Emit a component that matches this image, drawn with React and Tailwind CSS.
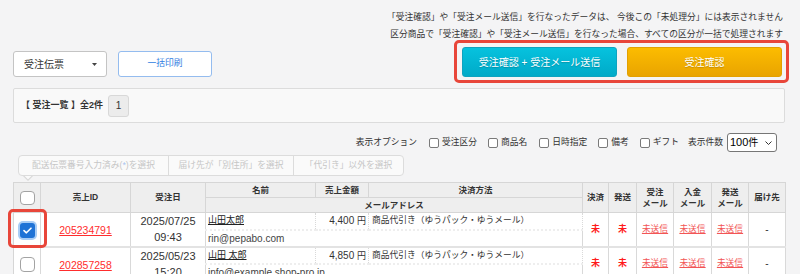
import React from 'react';

const cols = [27, 90, 75, 110, 53, 214, 26, 28, 37, 38, 37, 37];

const orders = [
  {
    id: '205234791',
    date: '2025/07/25',
    time: '09:43',
    name: '山田太郎',
    amount: '4,400',
    pay: '商品代引き（ゆうパック・ゆうメール）',
    email: 'rin@pepabo.com',
    checked: true,
  },
  {
    id: '202857258',
    date: '2025/05/23',
    time: '15:20',
    name: '山田 太郎',
    amount: '4,850',
    pay: '商品代引き（ゆうパック・ゆうメール）',
    email: 'info@example.shop-pro.jp',
    checked: false,
  },
];

function Box() {
  return <span className="inline-block w-[10px] h-[10px] border border-[#7a7a7a] rounded-[2px] bg-white mr-[3px]" />;
}

export default function App() {
  const th = 'border border-[#d6d6d6] bg-[#eeeeee] font-bold text-[8.5px] text-[#333] text-center leading-[11px] p-0';
  const td = 'border-r border-dotted border-[#d9d9d9] p-0';
  const bot = 'border-b-2 border-solid border-b-[#e3e3e3]';

  return (
    <div className="w-[800px] h-[274px] overflow-hidden bg-[#f4f4f5] text-[#333] font-['Liberation_Sans','Noto_Sans_CJK_JP',sans-serif]">
      {/* notes */}
      <div className="h-[40px] pt-[9px] pr-[17px] text-right text-[8.75px] leading-[17px] text-[#333]">
        <p>「受注確認」や「受注メール送信」を行なったデータは、 今後この「未処理分」には表示されません</p>
        <p>区分商品で「受注確認」や「受注メール送信」を行なった場合、すべての区分が一括で処理されます</p>
      </div>

      {/* actions */}
      <div className="flex justify-between items-start h-[43px] pl-[13px] pr-[11px]">
        <div className="flex gap-[11px] mt-[11px]">
          <div className="w-[94px] h-[26px] bg-white border border-[#c4c4c4] rounded-[3px] flex items-center justify-between pl-[10px] pr-[9px] text-[10px] text-[#333]">
            <span>受注伝票</span>
            <svg width="5" height="3" viewBox="0 0 5 3"><polygon points="0,0 5,0 2.5,3" fill="#444" /></svg>
          </div>
          <button className="w-[94px] h-[26px] bg-white border border-[#94bcef] rounded-[3px] text-[8.75px] text-[#2f7de1]">
            一括印刷
          </button>
        </div>
        <div className="w-[335px] h-[43px] border-[3px] border-[#e8463a] rounded-[5px] flex gap-[10px] pl-[5px] pt-[4px]">
          <button className="w-[155px] h-[30px] rounded-[3px] border border-[#0ea3bf] bg-gradient-to-b from-[#06c2de] to-[#00aac8] text-white text-[10px] [text-shadow:0_1px_1px_rgba(0,0,0,0.2)]">
            受注確認 + 受注メール送信
          </button>
          <button className="w-[155px] h-[30px] rounded-[3px] border border-[#e3a000] bg-gradient-to-b from-[#fcbc00] to-[#e9a400] text-white text-[10px] [text-shadow:0_1px_1px_rgba(0,0,0,0.2)]">
            受注確認
          </button>
        </div>
      </div>

      <div className="mx-[13px] mr-[15px]">
        {/* summary */}
        <div className="mt-[5px] h-[35px] bg-[#f9f9f9] border border-[#dcdcdc] rounded-[2px] flex items-center pl-[7px]">
          <span className="text-[9px] font-bold text-[#333]">【 受注一覧 】全2件</span>
          <span className="ml-[5px] w-[21px] h-[22px] bg-[#ececec] border border-[#d8d8d8] rounded-[3px] flex items-center justify-center text-[10px] text-[#333]">1</span>
        </div>

        {/* options */}
        <div className="mt-[10px] h-[19px] flex justify-end items-center pr-[8px] text-[8.75px] text-[#333]">
          <span className="mr-[12px]">表示オプション</span>
          <label className="flex items-center mr-[11px]"><Box />受注区分</label>
          <label className="flex items-center mr-[12px]"><Box />商品名</label>
          <label className="flex items-center mr-[11px]"><Box />日時指定</label>
          <label className="flex items-center mr-[11px]"><Box />備考</label>
          <label className="flex items-center mr-[9px]"><Box />ギフト</label>
          <span className="mr-[4px]">表示件数</span>
          <div className="w-[50px] h-[19px] bg-white border border-[#767676] rounded-[3px] flex items-center justify-between pl-[2px] pr-[4px] text-[11px] text-black">
            <span>100<span className="text-[10px]">件</span></span>
            <svg width="7" height="4" viewBox="0 0 7 4"><polyline points="0.5,0.5 3.5,3.5 6.5,0.5" fill="none" stroke="#333" strokeWidth="1" /></svg>
          </div>
        </div>

        {/* segmented filters */}
        <div className="relative mt-[3px] ml-[5px] w-[386px] h-[21px] flex bg-[#fafafa] border border-[#dcdcdc] rounded-[4px] text-[8.75px] text-[#c6c6c6]">
          <div className="w-[150px] flex items-center justify-center border-r border-[#dcdcdc]">
            配送伝票番号入力済み(<span className="text-[#a9c3f0]">*</span>)を選択
          </div>
          <div className="w-[125px] flex items-center justify-center border-r border-[#dcdcdc]">届け先が「別住所」を選択</div>
          <div className="flex-1 flex items-center justify-center">「代引き」以外を選択</div>
          <svg className="absolute left-[4px] top-[20px]" width="10" height="6" viewBox="0 0 10 6">
            <polygon points="0,0 10,0 5,5" fill="#d6d6d6" />
            <polygon points="1.5,0 8.5,0 5,3.5" fill="#fafafa" />
          </svg>
        </div>

        {/* table */}
        <table className="mt-[6px] w-[772px] table-fixed border-collapse border border-[#d6d6d6] bg-white">
          <colgroup>
            {cols.map((w, i) => <col key={i} style={{ width: w }} />)}
          </colgroup>
          <thead>
            <tr className="h-[15px]">
              <th rowSpan={2} className={th}>
                <span className="inline-block align-middle w-[15px] h-[14px] bg-white border border-[#a3a3a3] rounded-[4px]" />
              </th>
              <th rowSpan={2} className={th}>売上ID</th>
              <th rowSpan={2} className={th}>受注日</th>
              <th className={th}>名前</th>
              <th className={th}>売上金額</th>
              <th className={th}>決済方法</th>
              <th rowSpan={2} className={th}>決済</th>
              <th rowSpan={2} className={th}>発送</th>
              <th rowSpan={2} className={th}>受注<br />メール</th>
              <th rowSpan={2} className={th}>入金<br />メール</th>
              <th rowSpan={2} className={th}>発送<br />メール</th>
              <th rowSpan={2} className={th}>届け先</th>
            </tr>
            <tr className="h-[15px]">
              <th colSpan={3} className={th}>メールアドレス</th>
            </tr>
          </thead>
          <tbody>
            {orders.map((o) => (
              <React.Fragment key={o.id}>
                <tr className="h-[16px]">
                  <td rowSpan={2} className={`${td} ${bot} relative text-center align-middle`}>
                    {o.checked ? (
                      <>
                        <span className="inline-flex align-middle items-center justify-center w-[15px] h-[15px] rounded-[3px] bg-[#1f73d6] ring-2 ring-[#a9cdf5]">
                          <svg width="9" height="7" viewBox="0 0 9 7"><polyline points="1,3.6 3.4,5.8 8,1.2" fill="none" stroke="white" strokeWidth="1.6" strokeLinecap="round" strokeLinejoin="round" /></svg>
                        </span>
                        <span className="absolute left-[-6px] top-[-4px] w-[39px] h-[39px] border-[3px] border-[#e8463a] rounded-[5px]" />
                      </>
                    ) : (
                      <span className="inline-block align-middle w-[15px] h-[15px] bg-white border border-[#a3a3a3] rounded-[4px]" />
                    )}
                  </td>
                  <td rowSpan={2} className={`${td} ${bot} text-center`}>
                    <a className="text-[10.5px] text-[#ff2d2d] underline">{o.id}</a>
                  </td>
                  <td rowSpan={2} className={`${td} ${bot} text-center text-[11px] leading-[16px] text-[#333]`}>
                    {o.date}<br />{o.time}
                  </td>
                  <td className={`${td} border-b-2 border-b-[#eeeeee] pl-[2px] text-[9px] text-[#222]`}>
                    <span className="underline">{o.name}</span>
                  </td>
                  <td className={`${td} border-b-2 border-b-[#eeeeee] text-right pr-[2px] text-[10px] text-[#333] whitespace-nowrap`}>
                    {o.amount} <span className="text-[9px]">円</span>
                  </td>
                  <td className={`${td} border-b-2 border-b-[#eeeeee] pl-[3px] text-[8.75px] text-[#333] whitespace-nowrap`}>{o.pay}</td>
                  <td rowSpan={2} className={`${td} ${bot} text-center text-[9px] font-bold text-[#ff1a1a]`}>未</td>
                  <td rowSpan={2} className={`${td} ${bot} text-center text-[9px] font-bold text-[#ff1a1a]`}>未</td>
                  <td rowSpan={2} className={`${td} ${bot} text-center text-[8.75px] text-[#f25555] underline`}>未送信</td>
                  <td rowSpan={2} className={`${td} ${bot} text-center text-[8.75px] text-[#f25555] underline`}>未送信</td>
                  <td rowSpan={2} className={`${td} ${bot} text-center text-[8.75px] text-[#f25555] underline`}>未送信</td>
                  <td rowSpan={2} className={`${td} ${bot} text-center text-[10px] text-[#333]`}>-</td>
                </tr>
                <tr className="h-[16px]">
                  <td colSpan={3} className={`${td} ${bot} pl-[2px] text-[10px] text-[#444]`}>{o.email}</td>
                </tr>
              </React.Fragment>
            ))}
          </tbody>
        </table>
      </div>
    </div>
  );
}
